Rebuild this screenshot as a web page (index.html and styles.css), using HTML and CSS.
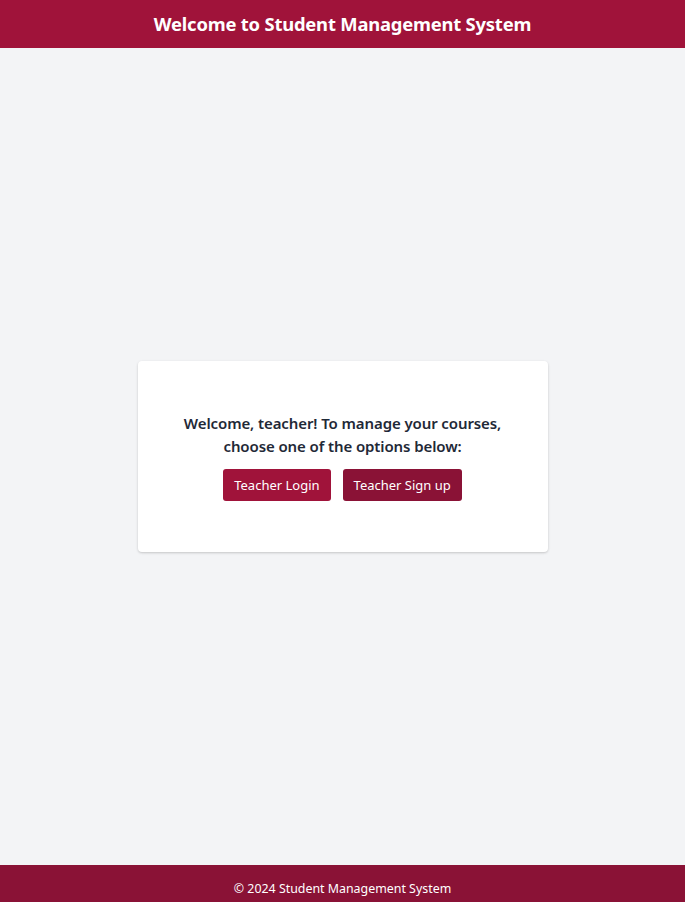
FILE: index.html
```html
<!DOCTYPE html>
<html lang="en">
<head>
<meta charset="utf-8">
<title>Student Management System</title>
<link rel="stylesheet" href="styles.css">
</head>
<body>
<header class="site-header">
  <h1 class="site-title">Welcome to Student Management System</h1>
</header>
<main class="main">
  <section class="card">
    <p class="card-text">Welcome, teacher! To manage your courses, choose one of the options below:</p>
    <div class="actions">
      <a class="btn btn-primary" href="#">Teacher Login</a>
      <a class="btn btn-dark" href="#">Teacher Sign up</a>
    </div>
  </section>
</main>
<footer class="site-footer">
  <p class="footer-text">© 2024 Student Management System</p>
</footer>
</body>
</html>
```

FILE: styles.css
```css
* { box-sizing: border-box; }
html, body { height: 100%; }
body {
  margin: 0;
  display: flex;
  flex-direction: column;
  min-height: 100vh;
  background: #f3f4f6;
  font-family: "Noto Sans", "Open Sans", sans-serif;
  color: #1f2937;
}
.site-header {
  background: #a0133a;
  height: 48px;
  display: flex;
  align-items: center;
  justify-content: center;
  padding-bottom: 1px;
}
.site-title {
  margin: 0;
  color: #ffffff;
  font-size: 18.4px;
  font-weight: 700;
  letter-spacing: -0.2px;
}
.main {
  flex: 1;
  display: flex;
  align-items: center;
  justify-content: center;
}
.card {
  width: 410px;
  background: #ffffff;
  border-radius: 4px;
  box-shadow: 0 1px 3px rgba(0,0,0,0.12), 0 1px 2px rgba(0,0,0,0.08);
  padding: 51px 32px;
  text-align: center;
}
.card-text {
  margin: 0 auto 11px;
  max-width: 330px;
  font-size: 15px;
  line-height: 23px;
  font-weight: 600;
  letter-spacing: -0.1px;
  color: #1f2937;
}
.actions {
  display: flex;
  justify-content: center;
  gap: 12px;
}
.btn {
  display: inline-flex;
  align-items: center;
  justify-content: center;
  height: 32px;
  padding: 0 11px;
  border-radius: 3px;
  color: #ffffff;
  text-decoration: none;
  font-size: 13px;
}
.btn-primary { background: #a0133a; }
.btn-dark { background: #8a1236; }
.site-footer {
  background: #8a1236;
  height: 37px;
  display: flex;
  align-items: center;
  justify-content: center;
  padding-top: 10px;
}
.footer-text {
  margin: 0;
  color: #ffffff;
  font-size: 12.4px;
}
```
